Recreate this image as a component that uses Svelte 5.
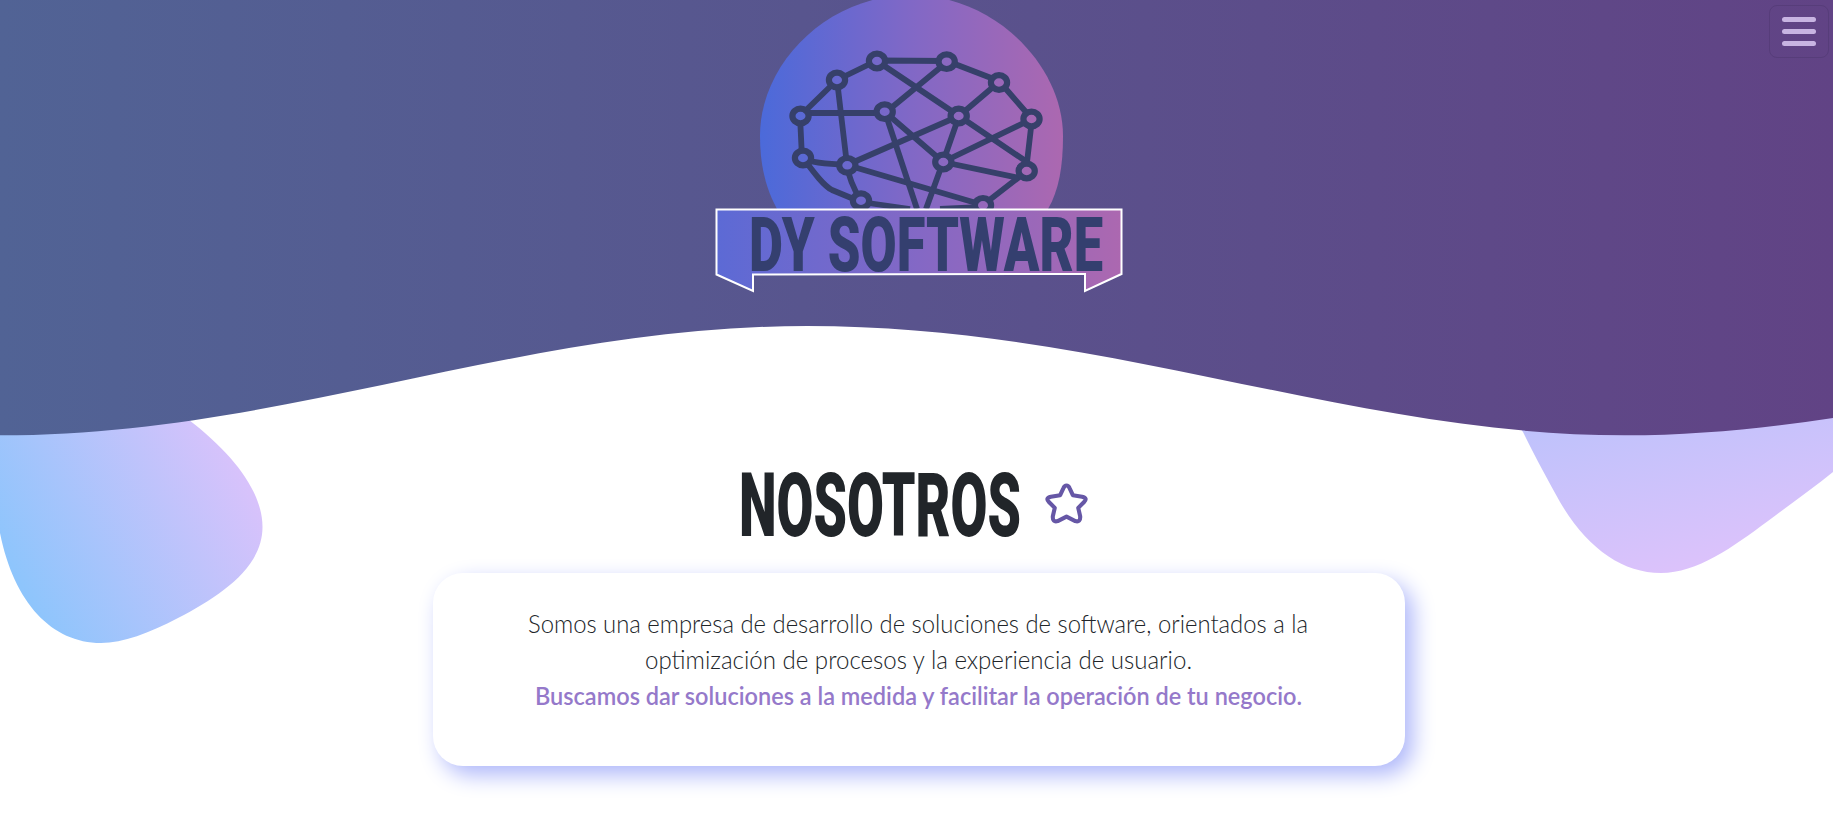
<script>
  const nodes = [
    [877, 61], [946.7, 61.7], [837, 80], [999, 82.500], [800.5, 116], [884.700, 111.700],
    [958.700, 116], [1031.500, 119], [803, 158], [847.300, 165.300], [943.300, 162], [1026.700, 171],
    [861, 200.700], [983, 205.300]
  ];
  const links = [
    'M837 80L877 60.500L947 61L999 81L1032 119L1026 171',
    'M837 80L800 116L802 158Q813 164 847 164.500',
    'M800 113H885L947 62', 'M837 80L847 165Q849 181 861 201',
    'M877 61L959 116L999 82', 'M885 112L943 162L1032 119',
    'M847 165L959 116L1027 162', 'M847 165L983 205L1027 171',
    'M943 162L1019 178', 'M885 112L917 209', 'M959 116L943 162L926 209',
    'M803 158C815 174 824 186 832 190L861 202L910 209', 'M983 207L940 209'
  ];
  const lines = [
    { text: 'Somos una empresa de desarrollo de soluciones de software, orientados a la', width: 780 },
    { text: 'optimización de procesos y la experiencia de usuario.', width: 547 },
    { text: 'Buscamos dar soluciones a la medida y facilitar la operación de tu negocio.', width: 767, strong: true }
  ];
</script>

<div class="page">
  <svg class="blobs" viewBox="0 0 1833 834" aria-hidden="true">
    <defs>
      <linearGradient id="blobLeft" gradientUnits="userSpaceOnUse" x1="18" y1="580" x2="240" y2="460">
        <stop offset="0" stop-color="#8ec5fc" /><stop offset="1" stop-color="#d9c2fb" />
      </linearGradient>
      <linearGradient id="blobRight" gradientUnits="userSpaceOnUse" x1="1610" y1="280" x2="1680" y2="572">
        <stop offset="0" stop-color="#a9c2fc" /><stop offset="1" stop-color="#dcc2fb" />
      </linearGradient>
    </defs>
    <path fill="url(#blobLeft)" d="M0 390H150L189 420C232 453 262.500 491 262.500 527C262.500 568 220 596 178 618C149 633 123 643 101 643C52 643 14 603 0 533Z" />
    <path fill="url(#blobRight)" d="M1500 400L1523 432C1537 461 1548 480 1560 502C1587 548 1622 573 1661 573C1697 573 1733 547 1768 521C1792 503 1813 488 1833 472V390Z" />
  </svg>

  <header>
    <svg class="wave" viewBox="0 0 1833 436" aria-hidden="true">
      <defs>
        <linearGradient id="sky" x1="0" x2="1">
          <stop offset="0" stop-color="#516395" /><stop offset="1" stop-color="#614385" />
        </linearGradient>
      </defs>
      <path fill="url(#sky)" d="M0 0H1833V418C1765 428 1697 435.300 1625 435.300C1350 435.300 1110 326 807 326C520 326 285 435.300 0 435.300Z" />
    </svg>

    <svg class="logo" viewBox="700 0 440 300" role="img" aria-label="DY SOFTWARE">
      <defs>
        <linearGradient id="orb" gradientUnits="userSpaceOnUse" x1="760" y1="0" x2="1063" y2="0">
          <stop offset="0" stop-color="#4b6ada" /><stop offset=".3" stop-color="#6c68ce" />
          <stop offset=".5" stop-color="#8168c6" /><stop offset="1" stop-color="#ac68b0" />
        </linearGradient>
        <linearGradient id="ribbon" gradientUnits="userSpaceOnUse" x1="716" y1="0" x2="1122" y2="0">
          <stop offset="0" stop-color="#5c6ad5" /><stop offset=".5" stop-color="#8468c5" />
          <stop offset="1" stop-color="#ac68b0" />
        </linearGradient>
      </defs>
      <path fill="url(#orb)" d="M777 209C765 187 760 163 760 136C760 62 829 -5 911 -5C994 -5 1063 65 1063 136C1063 166 1059 190 1048 209Z" />
      <g class="net">
        {#each links as d}<path {d} />{/each}
        {#each nodes as [x, y]}
          <ellipse cx={x} cy={y} rx="8.1" ry="7.3" fill="url(#orb)" />
        {/each}
      </g>
      <path class="band" fill="url(#ribbon)" d="M716.5 209.5H1121.5V274L1085 291V274L753 274.5V291L716.5 274.5Z" />
      <text class="brand" x="749" y="270.5" textLength="354" lengthAdjust="spacingAndGlyphs">DY SOFTWARE</text>
    </svg>

    <button class="menu" aria-label="Menu"><span></span><span></span><span></span></button>
  </header>

  <main>
    <div class="title">
      <svg class="heading" width="282" height="90" viewBox="0 0 282 90">
        <text x="-4" y="76" textLength="282" lengthAdjust="spacingAndGlyphs">NOSOTROS</text>
      </svg>
      <svg class="star" width="43" height="41" viewBox="0 0 44 42" aria-hidden="true">
        <path d="M22 2.5Q24 2.5 25 5L28.5 12.5L38 14Q44 15.5 40 19.5L34 25.5L36 34Q36.500 40.500 31 39L22 34.500L13 39Q7.500 40.500 8 34L10 25.500L4 19.500Q0 15.500 6 14L15.500 12.500L19 5Q20 2.500 22 2.500Z" />
      </svg>
    </div>
    <section class="card">
      {#each lines as line}
        <svg class:strong={line.strong} width={line.width} height="36">
          <text x="0" y="25" textLength={line.width} lengthAdjust="spacingAndGlyphs">{line.text}</text>
        </svg>
      {/each}
    </section>
  </main>
</div>

<style>
  :global(body) { margin: 0; background: #fff; overflow: hidden; }
  .page { position: relative; width: 1833px; height: 834px; overflow: hidden; }
  .blobs { position: absolute; inset: 0; width: 1833px; height: 834px; }
  header { position: relative; height: 436px; display: flex; }
  .wave { position: absolute; inset: 0; width: 1833px; height: 436px; }
  .logo { position: relative; width: 440px; height: 300px; margin-left: 700px; flex: none; }
  .net { fill: none; stroke: #36406a; stroke-width: 5.8; stroke-linejoin: round; }
  .net ellipse { stroke-width: 6.2; }
  .band { stroke: #fff; stroke-width: 2; }
  .brand { font: 900 76px Roboto, sans-serif; fill: #343f6f; }
  .menu {
    position: absolute; top: 5px; right: 4px; width: 60px; height: 53px;
    display: flex; flex-direction: column; align-items: center; gap: 7px;
    padding: 11px 0 0; box-sizing: border-box;
    border: 1px solid #573d7a; border-radius: 8px; background: none;
  }
  .menu span { width: 34px; height: 5px; border-radius: 3px; background: #c8b4e2; flex: none; }
  main { position: relative; display: flex; flex-direction: column; align-items: center; }
  .title { display: flex; width: 350px; height: 137px; padding-top: 24px; box-sizing: border-box; }
  .heading { flex: none; margin-left: 1px; overflow: visible; }
  .heading text { font: 900 89px Roboto, sans-serif; fill: #212529; }
  .star { flex: none; margin: 22.5px 0 0 20px; fill: none; stroke: #6657a6; stroke-width: 4.2; stroke-linejoin: round; }
  .card {
    width: 972px; height: 193px; margin-left: 5px; padding-top: 35px; box-sizing: border-box;
    display: flex; flex-direction: column; align-items: center;
    border-radius: 30px; background: #fff; box-shadow: 8px 9px 22px #aeb7fa;
  }
  .card svg { flex: none; overflow: visible; position: relative; left: -1px; }
  .card text { font: 300 25px Lato, sans-serif; fill: #212529; }
  .card .strong text { font-weight: 600; fill: #9579ca; }
</style>
